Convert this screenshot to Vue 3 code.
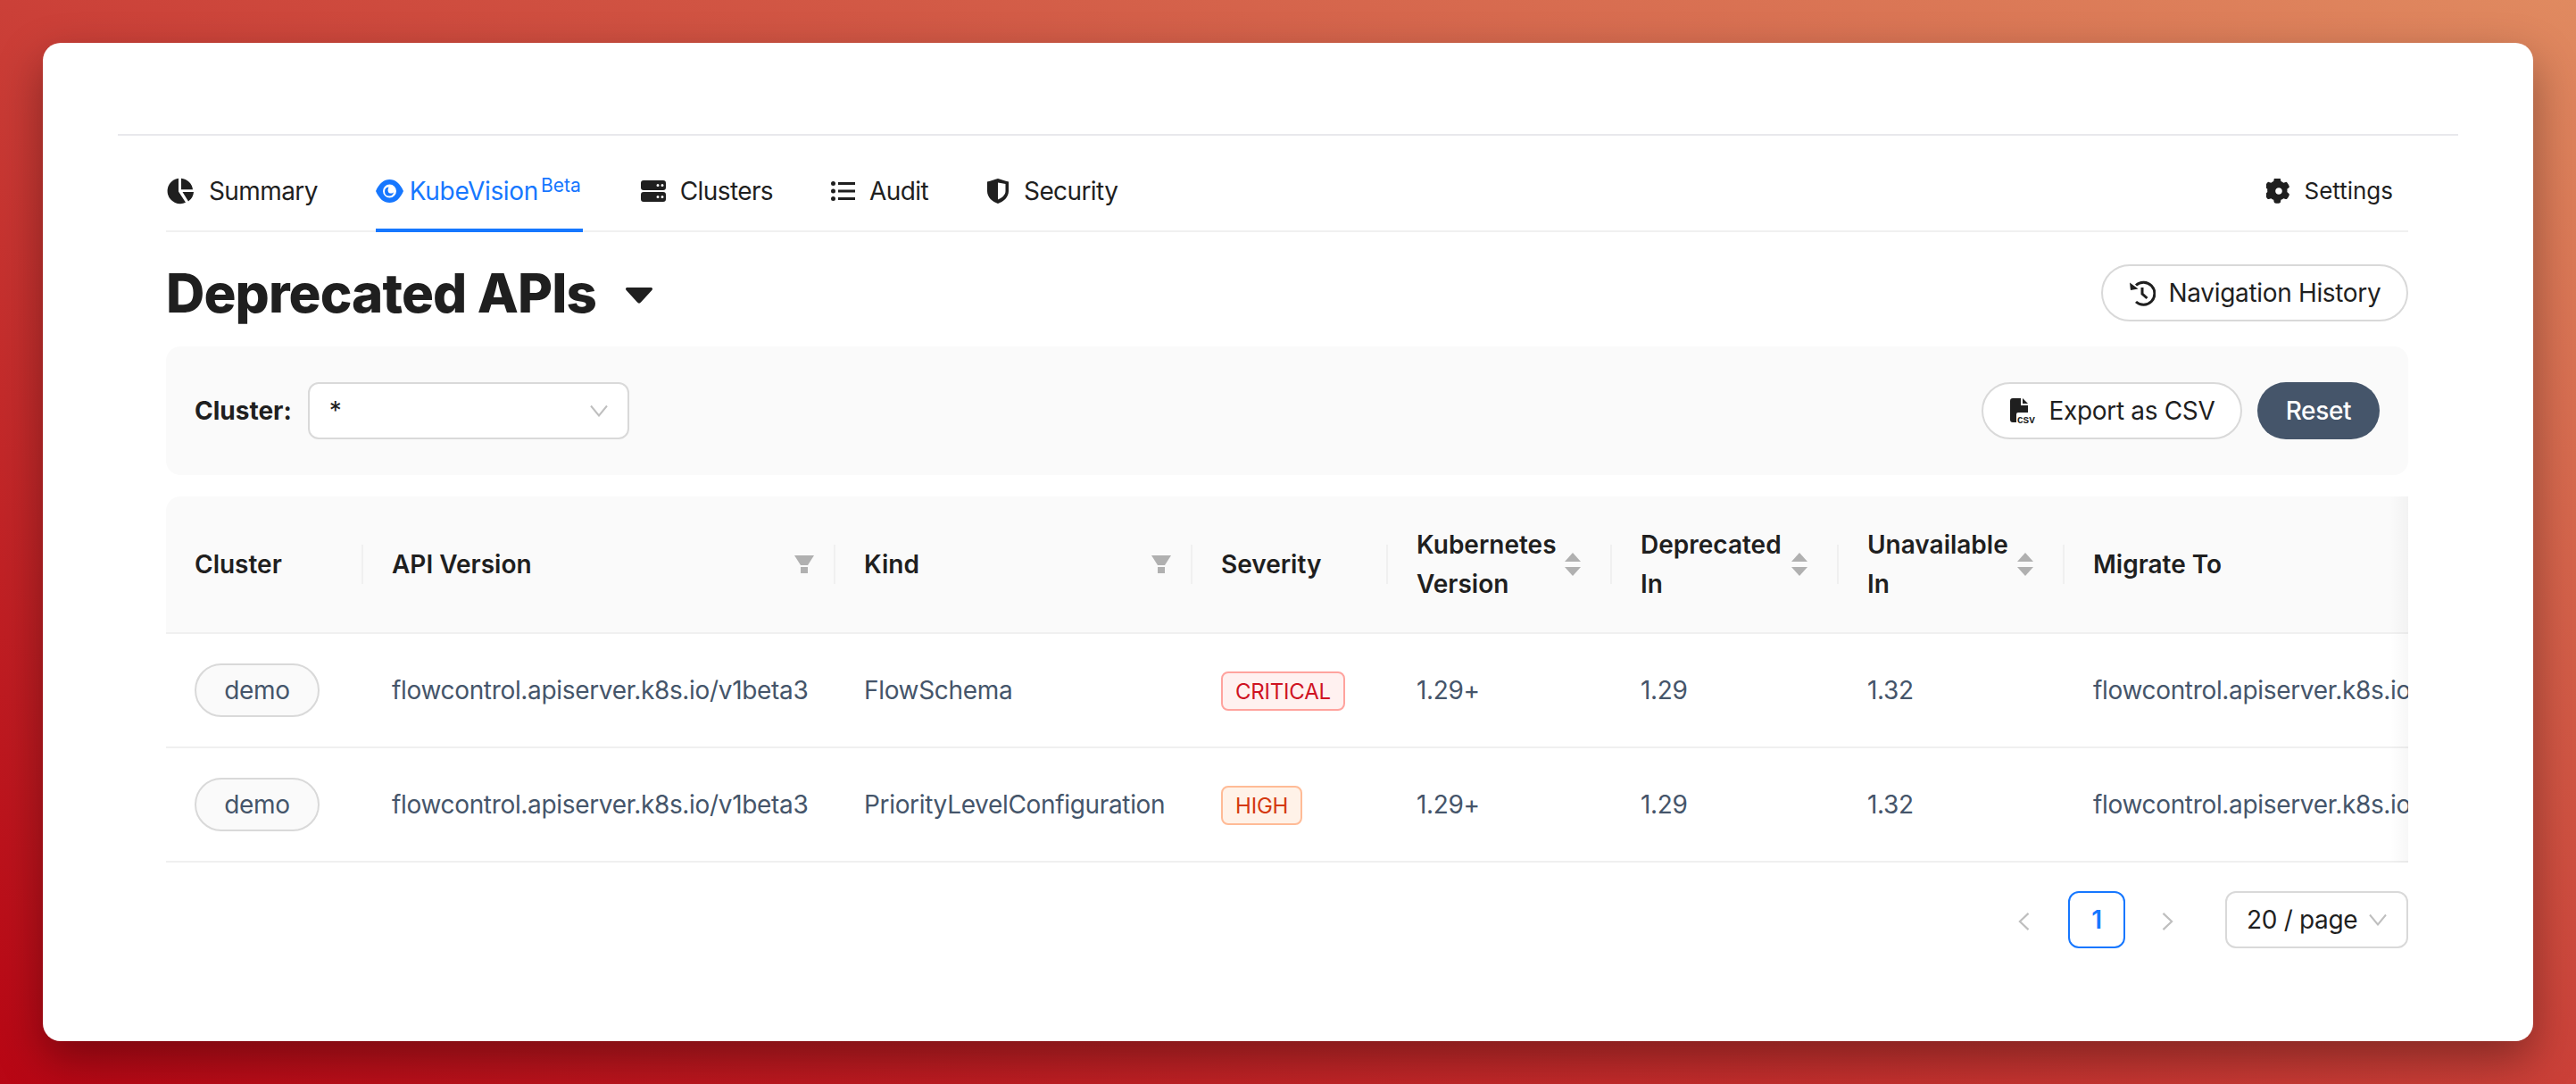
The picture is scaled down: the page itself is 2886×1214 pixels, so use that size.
<template>
  <div class="page">
    <div class="card">
      <div class="top-rule"></div>
      <div class="content">
        <nav class="tabs">
          <a v-for="tab in tabs" :key="tab.label" class="tab" :class="{ active: tab.active }">
            <svg
              class="tab-icon"
              :width="tab.w"
              height="30"
              :viewBox="`0 0 ${tab.w} 30`"
              fill="currentColor"
            >
              <path :d="tab.icon" fill-rule="evenodd" />
            </svg>
            <span>{{ tab.label }}</span>
            <sup v-if="tab.badge" class="beta">{{ tab.badge }}</sup>
          </a>
          <a class="tab settings">
            <svg class="tab-icon" width="28" height="28" viewBox="0 0 1024 1024" fill="currentColor">
              <path :d="gearIcon" fill-rule="evenodd" />
            </svg>
            <span>Settings</span>
          </a>
        </nav>

        <div class="title-row">
          <h1 class="title">Deprecated APIs</h1>
          <svg class="title-caret" viewBox="0 0 30 18">
            <path d="M2 0h26c2 0 2.600 1.600 1.400 3L17 16.600c-1.200 1.400-2.800 1.400-4 0L.6 3C-.6 1.600 0 0 2 0z" />
          </svg>
          <button class="btn history">
            <svg class="btn-icon" viewBox="0 0 30 30" fill="none" stroke="currentColor" stroke-width="3">
              <path d="M8 6.500A12.500 12.500 0 1 1 8 25" />
              <path d="M15 9v7l5.500 5" />
              <path d="M1 3.500L2 12l8.500-1.500z" fill="currentColor" stroke="none" />
            </svg>
            <span>Navigation History</span>
          </button>
        </div>

        <div class="filters">
          <label class="filter-label">Cluster:</label>
          <div class="select cluster-select">
            <span>*</span>
            <svg class="chev" viewBox="0 0 20 14"><path d="M1 1.500L10 12.500 19 1.500" /></svg>
          </div>
          <div class="filter-actions">
            <button class="btn export">
              <svg class="btn-icon csv-icon" viewBox="0 0 30 30">
                <path d="M1 4q0-3 3-3h9v8h8v8H10q-2 0-2 2v9H4q-3 0-3-3z" />
                <path d="M15 1l6 6h-6z" />
                <text x="9" y="28.500" class="csv-text">CSV</text>
              </svg>
              <span>Export as CSV</span>
            </button>
            <button class="btn reset">Reset</button>
          </div>
        </div>

        <div class="table-wrap">
          <table class="table">
            <colgroup>
              <col v-for="col in columns" :key="col.key" :style="{ width: col.width + 'px' }" />
            </colgroup>
            <thead>
              <tr>
                <th v-for="(col, i) in columns" :key="col.key">
                  <div class="th-inner">
                    <span class="th-label">
                      <template v-for="(line, n) in col.lines" :key="n">{{ line }}<br v-if="n < col.lines.length - 1" /></template>
                    </span>
                    <svg v-if="col.filter" class="filter-icon" viewBox="0 0 22 20">
                      <path d="M0 0h22l-7 11H7z" />
                      <path d="M7 13h8v7H7z" />
                    </svg>
                    <span v-if="col.sort" class="sorter">
                      <i class="up"></i>
                      <i class="down"></i>
                    </span>
                  </div>
                  <span v-if="i < columns.length - 1" class="divider"></span>
                </th>
              </tr>
            </thead>
            <tbody>
              <tr v-for="row in rows" :key="row.kind">
                <td><span class="cluster-pill">{{ row.cluster }}</span></td>
                <td>{{ row.api }}</td>
                <td>{{ row.kind }}</td>
                <td><span class="sev" :class="row.sevClass">{{ row.severity }}</span></td>
                <td>{{ row.version }}</td>
                <td>{{ row.deprecated }}</td>
                <td>{{ row.unavailable }}</td>
                <td>{{ row.migrate }}</td>
              </tr>
            </tbody>
          </table>
          <div class="scroll-shadow"></div>
        </div>

        <div class="pager">
          <svg class="pager-arrow prev" viewBox="0 0 14 24"><path d="M12.500 2L2 12l10.500 10" /></svg>
          <span class="page-num">1</span>
          <svg class="pager-arrow next" viewBox="0 0 14 24"><path d="M1.500 2L12 12 1.500 22" /></svg>
          <div class="select page-size">
            <span>20 / page</span>
            <svg class="chev" viewBox="0 0 20 14"><path d="M1 1.500L10 12.500 19 1.500" /></svg>
          </div>
        </div>
      </div>
    </div>
  </div>
</template>

<script setup>
const gearIcon = 'M924 612l-70-60c3-20 5-40 5-60s-2-40-5-60l70-60c18-15 25-40 17-62-19-55-48-105-86-150-15-18-40-25-62-17l-87 31c-32-26-67-47-105-61l-17-90c-4-23-23-41-46-45-58-10-117-10-175 0-23 4-42 22-46 45l-17 90c-38 14-73 35-104 61l-88-31c-22-8-47-1-62 17-38 45-67 95-86 150-8 22-1 47 17 62l71 60c-3 20-5 40-5 60s2 40 5 60l-71 60c-18 15-25 40-17 62 19 55 48 105 86 150 15 18 40 25 62 17l88-31c31 26 66 47 104 61l17 90c4 23 23 41 46 45 58 10 117 10 175 0 23-4 42-22 46-45l17-90c38-14 73-35 105-61l87 31c22 8 47 1 62-17 38-45 67-95 86-150 8-22 1-47-17-62zM512 652c-77 0-140-63-140-140s63-140 140-140 140 63 140 140-63 140-140 140z'

const tabs = [
  {
    label: 'Summary',
    w: 32,
    icon: 'M14 .7A14.300 14.300 0 1 0 22 27.800L14 15.500zM17 .7A14.300 14.300 0 0 1 30 13.300H17zM18.500 16H31A14.300 14.300 0 0 1 25 26.500z'
  },
  {
    label: 'KubeVision',
    badge: 'Beta',
    active: true,
    w: 31,
    icon: 'M0 15C4 6 9 2 15.500 2S27 6 31 15C27 24 22 28 15.500 28S4 24 0 15zM8 15a7.500 7.500 0 1 0 15 0a7.500 7.500 0 1 0-15 0zM14.500 10.500A5 5 0 1 0 20 16C19 18 15 18 14 16C13 14 14 12 14.500 10.500z'
  },
  {
    label: 'Clusters',
    w: 28,
    icon: 'M3 3h22q3 0 3 3v5q0 3-3 3H3q-3 0-3-3V6q0-3 3-3zM17.500 8.500a1.500 1.500 0 1 0 3 0a1.500 1.500 0 1 0-3 0zM22.500 8.500a1.500 1.500 0 1 0 3 0a1.500 1.500 0 1 0-3 0zM3 16h22q3 0 3 3v5q0 3-3 3H3q-3 0-3-3v-5q0-3 3-3zM17.500 21.500a1.500 1.500 0 1 0 3 0a1.500 1.500 0 1 0-3 0zM22.500 21.500a1.500 1.500 0 1 0 3 0a1.500 1.500 0 1 0-3 0z'
  },
  {
    label: 'Audit',
    w: 27,
    icon: 'M0 6.500a2.500 2.500 0 1 0 5 0a2.500 2.500 0 1 0-5 0zM8 5h19v3H8zM0 15a2.500 2.500 0 1 0 5 0a2.500 2.500 0 1 0-5 0zM8 13.500h19v3H8zM0 23.500a2.500 2.500 0 1 0 5 0a2.500 2.500 0 1 0-5 0zM8 22h19v3H8z'
  },
  {
    label: 'Security',
    w: 26,
    icon: 'M13 1C10 2 5 3.500 1 4.500V15C1 22 7 27 13 29C19 27 25 22 25 15V4.500C21 3.500 16 2 13 1zM13 5.500V24.500C17 23 21.500 19.500 21.500 15V7C19 6.500 16 6 13 5.500z'
  }
]

const columns = [
  { key: 'cluster', lines: ['Cluster'], width: 221 },
  { key: 'api', lines: ['API Version'], width: 529, filter: true },
  { key: 'kind', lines: ['Kind'], width: 400, filter: true },
  { key: 'severity', lines: ['Severity'], width: 219 },
  { key: 'version', lines: ['Kubernetes', 'Version'], width: 251, sort: true },
  { key: 'deprecated', lines: ['Deprecated', 'In'], width: 254, sort: true },
  { key: 'unavailable', lines: ['Unavailable', 'In'], width: 253, sort: true },
  { key: 'migrate', lines: ['Migrate To'], width: 640 }
]

const rows = [
  {
    cluster: 'demo',
    api: 'flowcontrol.apiserver.k8s.io/v1beta3',
    kind: 'FlowSchema',
    severity: 'CRITICAL',
    sevClass: 'critical',
    version: '1.29+',
    deprecated: '1.29',
    unavailable: '1.32',
    migrate: 'flowcontrol.apiserver.k8s.io/v1'
  },
  {
    cluster: 'demo',
    api: 'flowcontrol.apiserver.k8s.io/v1beta3',
    kind: 'PriorityLevelConfiguration',
    severity: 'HIGH',
    sevClass: 'high',
    version: '1.29+',
    deprecated: '1.29',
    unavailable: '1.32',
    migrate: 'flowcontrol.apiserver.k8s.io/v1'
  }
]
</script>

<style>
html,
body {
  margin: 0;
}
</style>

<style scoped>
.page {
  width: 2886px;
  height: 1214px;
  box-sizing: border-box;
  padding: 48px;
  overflow: hidden;
  font-family: Inter, "Liberation Sans", sans-serif;
  font-size: 28px;
  letter-spacing: -0.33px;
  color: #1f1f1f;
  background: linear-gradient(to top right, #b80614 0%, #cb4038 50%, #e08a60 100%);
}

.card {
  height: 1118px;
  box-sizing: border-box;
  padding: 102px 84px 0;
  background: #fff;
  border-radius: 20px;
  box-shadow: 0 20px 50px rgba(0, 0, 0, 0.35);
}

.top-rule {
  height: 2px;
  background: #e8e8ec;
}

.content {
  padding: 0 56px 0 54px;
}

.tabs {
  display: flex;
  align-items: stretch;
  height: 108px;
  gap: 65px;
  padding-top: 16px;
  border-bottom: 2px solid #f0f0f0;
  box-sizing: border-box;
  letter-spacing: -0.6px;
}

.tab {
  display: flex;
  align-items: center;
  gap: 16px;
  line-height: 1;
  margin-bottom: -2px;
}

.tab.active {
  color: #1677ff;
  gap: 7px;
  padding: 4px 2px 0 0;
  border-bottom: 4px solid #1677ff;
  letter-spacing: -0.33px;
}

.tab.settings {
  margin-left: auto;
  gap: 14px;
  padding-right: 17px;
  font-size: 26px;
  letter-spacing: 0;
}

.tab-icon {
  flex: none;
}

.beta {
  font-size: 21px;
  margin: -14px 0 0 -4px;
  line-height: 1;
  letter-spacing: 0;
}

.title-row {
  display: flex;
  align-items: center;
  height: 128px;
  box-sizing: border-box;
  padding-top: 8px;
}

.title {
  margin: 0;
  font-size: 60px;
  font-weight: 800;
  line-height: 1;
  letter-spacing: -0.9px;
}

.title-caret {
  width: 30px;
  height: 18px;
  margin-left: 33px;
  margin-top: 6px;
  fill: #1f1f1f;
}

.btn {
  display: inline-flex;
  align-items: center;
  justify-content: center;
  gap: 15px;
  height: 64px;
  box-sizing: border-box;
  padding: 0;
  border: 2px solid #d9d9d9;
  border-radius: 32px;
  background: #fff;
  color: #1f1f1f;
  font: inherit;
  letter-spacing: inherit;
}

.btn-icon {
  width: 30px;
  height: 30px;
  flex: none;
}

.history {
  margin-left: auto;
  width: 344px;
}

.csv-icon {
  fill: #1f1f1f;
}

.csv-text {
  font-size: 11px;
  font-weight: 700;
  letter-spacing: 0;
  font-family: "Liberation Mono", monospace;
}

.filters {
  display: flex;
  align-items: center;
  height: 144px;
  box-sizing: border-box;
  padding: 0 32px;
  background: #fafafa;
  border-radius: 16px;
}

.filter-label {
  font-weight: 700;
  letter-spacing: 0;
  margin-right: 18px;
}

.select {
  display: flex;
  align-items: center;
  justify-content: space-between;
  height: 64px;
  box-sizing: border-box;
  border: 2px solid #d9d9d9;
  border-radius: 12px;
  background: #fff;
}

.cluster-select {
  width: 360px;
  padding: 0 22px;
}

.chev {
  width: 20px;
  height: 14px;
  fill: none;
  stroke: #bfbfbf;
  stroke-width: 2;
}

.filter-actions {
  margin-left: auto;
  display: flex;
  gap: 17px;
}

.export {
  width: 292px;
}

.reset {
  width: 137px;
  border: none;
  background: #45556a;
  color: #fff;
  font-weight: 500;
}

.table-wrap {
  position: relative;
  margin-top: 24px;
  overflow: hidden;
  border-radius: 16px 0 0 0;
}

.table {
  table-layout: fixed;
  width: 2767px;
  border-collapse: separate;
  border-spacing: 0;
}

th {
  height: 154px;
  box-sizing: border-box;
  padding: 0 32px;
  position: relative;
  text-align: left;
  font-weight: 600;
  letter-spacing: 0;
  background: #fafafa;
  border-bottom: 2px solid #f0f0f0;
}

.th-inner {
  display: flex;
  align-items: center;
  justify-content: space-between;
}

.th-label {
  line-height: 44px;
  white-space: nowrap;
}

.divider {
  position: absolute;
  right: 0;
  top: 50%;
  width: 2px;
  height: 44px;
  margin-top: -22px;
  background: #f0f0f0;
}

.filter-icon {
  width: 22px;
  height: 20px;
  fill: #b0b0b0;
  margin-right: -8px;
  flex: none;
}

.sorter {
  display: flex;
  flex-direction: column;
  gap: 6px;
  margin-right: 3px;
  flex: none;
}

.sorter i {
  display: block;
  width: 0;
  height: 0;
  border-left: 9px solid transparent;
  border-right: 9px solid transparent;
}

.sorter .up {
  border-bottom: 10px solid #b0b0b0;
}

.sorter .down {
  border-top: 10px solid #b0b0b0;
}

td {
  height: 128px;
  box-sizing: border-box;
  padding: 0 32px;
  color: #45556a;
  white-space: nowrap;
  border-bottom: 2px solid #f0f0f0;
}

.cluster-pill {
  display: inline-flex;
  align-items: center;
  justify-content: center;
  width: 140px;
  height: 60px;
  box-sizing: border-box;
  border: 2px solid #d9d9d9;
  border-radius: 30px;
  background: #fafafa;
}

.sev {
  display: inline-block;
  height: 44px;
  line-height: 42px;
  box-sizing: border-box;
  margin-top: 2px;
  padding: 0 14px;
  border: 2px solid;
  border-radius: 8px;
  font-size: 24px;
  letter-spacing: -0.2px;
  vertical-align: middle;
}

.critical {
  color: #cf1322;
  background: #fff1f0;
  border-color: #ffa39e;
}

.high {
  color: #d4380d;
  background: #fff2e8;
  border-color: #ffbb96;
}

.scroll-shadow {
  position: absolute;
  top: 0;
  right: 0;
  bottom: 0;
  width: 20px;
  background: linear-gradient(to left, rgba(0, 0, 0, 0.03), rgba(0, 0, 0, 0));
  pointer-events: none;
}

.pager {
  display: flex;
  align-items: center;
  justify-content: flex-end;
  margin-top: 32px;
}

.pager-arrow {
  width: 13px;
  height: 22px;
  fill: none;
  stroke: #bfbfbf;
  stroke-width: 2.400;
  margin-top: 4px;
}

.page-num {
  width: 64px;
  height: 64px;
  box-sizing: border-box;
  margin: 0 41px 0 43px;
  display: flex;
  align-items: center;
  justify-content: center;
  border: 2px solid #1677ff;
  border-radius: 12px;
  color: #1677ff;
  font-weight: 600;
}

.page-size {
  width: 205px;
  margin-left: 58px;
  padding: 0 22px;
}
</style>
